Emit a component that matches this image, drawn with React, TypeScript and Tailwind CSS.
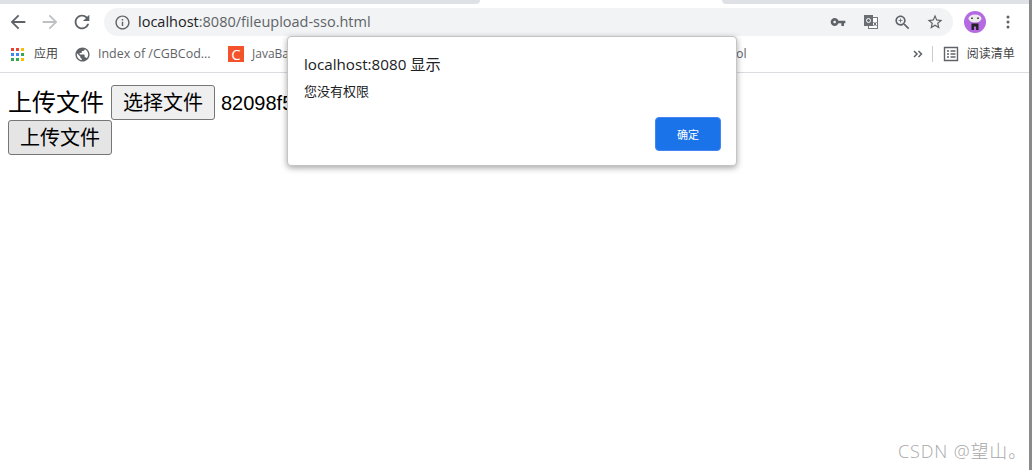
import React from 'react'

const ui = "font-['Open_Sans','Noto_Sans_CJK_SC',sans-serif]"
const page = "font-['Liberation_Sans','Noto_Sans_CJK_SC',sans-serif]"

function Icon({ d, size = 24, className = '' }: { d: string; size?: number; className?: string }) {
    return (
        <svg width={size} height={size} viewBox='0 0 24 24' className={className} fill='currentColor'>
            <path d={d} />
        </svg>
    )
}

function Apps() {
    const colors = ['#ea4335', '#ea4335', '#fbbc05', '#4285f4', '#4285f4', '#34a853', '#34a853', '#34a853', '#fbbc05']
    return (
        <div className='grid grid-cols-3 gap-[2px] w-[13px] h-[13px]'>
            {colors.map((c, i) => (
                <div key={i} className='w-[3px] h-[3px]' style={{ backgroundColor: c }}></div>
            ))}
        </div>
    )
}

function Translate() {
    return (
        <svg width='16' height='16' viewBox='0 0 16 16'>
            <rect x='5.5' y='3.5' width='9' height='11' fill='#fff' stroke='#777' strokeWidth='1' />
            <rect x='1' y='1' width='9' height='11' fill='#6b6f73' />
            <circle cx='5.5' cy='6.5' r='2' fill='none' stroke='#fff' strokeWidth='1' />
            <path d='M10.5 8l3 4M13.5 8l-3 4' stroke='#5f6368' strokeWidth='1' />
        </svg>
    )
}

function Avatar() {
    return (
        <div className='w-[22px] h-[22px] rounded-full bg-[#b36ae2] flex items-center justify-center overflow-hidden'>
            <svg width='18' height='18' viewBox='0 0 18 18'>
                <ellipse cx='9' cy='5.5' rx='6.5' ry='4' fill='#ececec' />
                <rect x='5' y='4.5' width='2' height='1.5' fill='#555' />
                <rect x='11' y='4.5' width='2' height='1.5' fill='#555' />
                <path d='M5.5 10.5h7V17h-2.4v-3.6H7.9V17H5.5z' fill='#222' />
            </svg>
        </div>
    )
}

export default function App() {
    return (
        <div className={`relative flex w-[1032px] h-[470px] overflow-hidden bg-white ${ui}`}>
            <div className='flex flex-col flex-1 min-w-0'>
                {/* tab strip */}
                <div className='flex h-[4px] shrink-0'>
                    <div className='w-[480px] bg-[#dee1e6] rounded-br-md'></div>
                    <div className='w-[242px] bg-white'></div>
                    <div className='flex-1 bg-[#dee1e6] rounded-bl-md'></div>
                </div>

                {/* toolbar */}
                <div className='flex items-start h-[32px] shrink-0'>
                    <div className='flex items-center h-[36px] pl-[7px]'>
                        <Icon d='M20 11H7.83l5.59-5.59L12 4l-8 8 8 8 1.41-1.41L7.83 13H20v-2z' size={22} className='text-[#5f6368]' />
                        <Icon d='M12 4l-1.41 1.41L16.17 11H4v2h12.17l-5.58 5.59L12 20l8-8z' size={22} className='text-[#bdc1c6] ml-[10px]' />
                        <Icon d='M17.65 6.35C16.2 4.9 14.21 4 12 4c-4.42 0-7.99 3.58-7.99 8s3.57 8 7.99 8c3.73 0 6.84-2.55 7.73-6h-2.08c-.82 2.33-3.04 4-5.65 4-3.31 0-6-2.69-6-6s2.69-6 6-6c1.66 0 3.14.69 4.22 1.78L13 11h7V4l-2.35 2.35z' size={22} className='text-[#5f6368] ml-[10px]' />
                    </div>
                    <div className='flex items-center w-[849px] h-[28px] mt-[4px] ml-[11px] rounded-full bg-[#f1f3f4]'>
                        <Icon d='M11 7h2v2h-2zm0 4h2v6h-2zm1-9C6.48 2 2 6.48 2 12s4.48 10 10 10 10-4.48 10-10S17.52 2 12 2zm0 18c-4.41 0-8-3.59-8-8s3.59-8 8-8 8 3.59 8 8-3.59 8-8 8z' size={17} className='text-[#5f6368] ml-[10px]' />
                        <span className='ml-[7px] text-[14.5px] leading-none text-[#202124] whitespace-nowrap'>
                            localhost<span className='text-[#5f6368]'>:8080/fileupload-sso.html</span>
                        </span>
                        <div className='flex items-center ml-auto mr-[9px] text-[#5f6368]'>
                            <Icon d='M12.65 10C11.83 7.67 9.61 6 7 6c-3.31 0-6 2.69-6 6s2.69 6 6 6c2.61 0 4.83-1.67 5.65-4H17v4h4v-4h2v-4H12.65zM7 14c-1.1 0-2-.9-2-2s.9-2 2-2 2 .9 2 2-.9 2-2 2z' size={16} />
                            <div className='ml-[17px]'><Translate /></div>
                            <Icon d='M15.5 14h-.79l-.28-.27C15.41 12.59 16 11.11 16 9.5 16 5.91 13.09 3 9.5 3S3 5.91 3 9.5 5.91 16 9.5 16c1.61 0 3.09-.59 4.23-1.57l.27.28v.79l5 4.99L20.49 19l-4.99-5zm-6 0C7.01 14 5 11.99 5 9.5S7.01 5 9.5 5 14 7.01 14 9.5 11.99 14 9.5 14zM12 10h-2v2H9v-2H7V9h2V7h1v2h2v1z' size={19} className='ml-[14px]' />
                            <Icon d='M22 9.24l-7.19-.62L12 2 9.19 8.63 2 9.24l5.46 4.73L5.82 21 12 17.27 18.18 21l-1.63-7.03L22 9.24zM12 15.4l-3.76 2.27 1-4.28-3.32-2.88 4.38-.38L12 6.1l1.71 4.04 4.38.38-3.32 2.88 1 4.28L12 15.4z' size={18} className='ml-[14px]' />
                        </div>
                    </div>
                    <div className='flex items-center h-[36px] ml-[11px]'>
                        <Avatar />
                        <svg width='4' height='14' viewBox='0 0 4 14' className='ml-[20px]'>
                            <circle cx='2' cy='2' r='1.5' fill='#5f6368' />
                            <circle cx='2' cy='7' r='1.5' fill='#5f6368' />
                            <circle cx='2' cy='12' r='1.5' fill='#5f6368' />
                        </svg>
                    </div>
                </div>

                {/* bookmarks bar */}
                <div className='flex items-center h-[37px] shrink-0 pl-[11px] border-b border-[#dadce0] text-[12px] text-[#5f6368] whitespace-nowrap'>
                    <Apps />
                    <span className='ml-[10px] text-[#444]'>应用</span>
                    <Icon d='M12 2C6.48 2 2 6.48 2 12s4.48 10 10 10 10-4.48 10-10S17.52 2 12 2zm-1 17.93c-3.95-.49-7-3.85-7-7.93 0-.62.08-1.21.21-1.79L9 15v1c0 1.1.9 2 2 2v1.93zm6.9-2.54c-.26-.81-1-1.39-1.9-1.39h-1v-3c0-.55-.45-1-1-1H8v-2h2c.55 0 1-.45 1-1V7h2c1.1 0 2-.9 2-2v-.41c2.93 1.19 5 4.06 5 7.41 0 2.08-.8 3.97-2.1 5.39z' size={17} className='ml-[16px] text-[#5f6368]' />
                    <span className='ml-[7px] w-[114px] text-[12.45px]'>Index of /CGBCod...</span>
                    <div className='flex items-center justify-center w-[16px] h-[16px] ml-[16px] bg-[#f4522b] text-white text-[15px] leading-none'>C</div>
                    <span className='ml-[8px] w-[36px]'>JavaBa</span>
                    <span className='ml-[448px] text-[12.45px]'>ol</span>
                    <svg width='10' height='8' viewBox='0 0 10 8' className='ml-[166px]'>
                        <path d='M1 1l3 3-3 3M5.5 1l3 3-3 3' fill='none' stroke='#5f6368' strokeWidth='1.5' />
                    </svg>
                    <div className='w-px h-[16px] ml-[9px] bg-[#c8cacd]'></div>
                    <svg width='16' height='16' viewBox='0 0 16 16' className='ml-[10px]'>
                        <path d='M1.5 1.5h13v13h-13zM4 5h2M7.5 5h5M4 8h2M7.5 8h5M4 11h2M7.5 11h5' fill='none' stroke='#5f6368' strokeWidth='1.4' />
                    </svg>
                    <span className='ml-[8px] text-[#444]'>阅读清单</span>
                </div>

                {/* page content */}
                <div className={`flex flex-col items-start pl-2 pt-3 text-black ${page}`}>
                    <div className='flex items-center h-[35px]'>
                        <span className='text-2xl leading-none mt-[1px]'>上传文件</span>
                        <button type='button' className='w-[104px] h-[35px] ml-[7px] border border-[#767676] rounded-[3px] bg-[#efefef] text-[20px] leading-none'>选择文件</button>
                        <span className='ml-[6px] mt-[1px] text-[20px] leading-none'>82098f5</span>
                    </div>
                    <button type='button' className='w-[104px] h-[35px] border border-[#767676] rounded-[3px] bg-[#e5e5e5] text-[20px] leading-none'>上传文件</button>
                </div>
            </div>

            {/* screenshot's right edge */}
            <div className='w-[3px] shrink-0 bg-[#8a8a8a]'></div>

            {/* alert dialog */}
            <div className='absolute left-[287px] top-[36px] flex flex-col w-[450px] h-[130px] pl-4 pr-[15px] bg-white border border-[#c4c4c4] rounded-[4px] shadow-[0_2px_6px_rgba(0,0,0,0.35)]'>
                <div className='mt-[17px] text-[15.2px] leading-[20px] text-[#202124]'>localhost:8080 显示</div>
                <div className='mt-[8px] text-[13px] leading-[18px] text-[#202124]'>您没有权限</div>
                <button type='button' className='self-end w-[66px] h-[34px] mt-[17px] bg-[#1a73e8] border border-[#4285f4] rounded-[4px] text-white text-[11px] leading-none'>确定</button>
            </div>

            {/* watermark */}
            <div className='absolute right-[5px] bottom-[6px] text-[18px] font-light leading-[26px] tracking-[0.85px] text-[#a8a8a8] whitespace-nowrap'>CSDN @望山。</div>
        </div>
    )
}
